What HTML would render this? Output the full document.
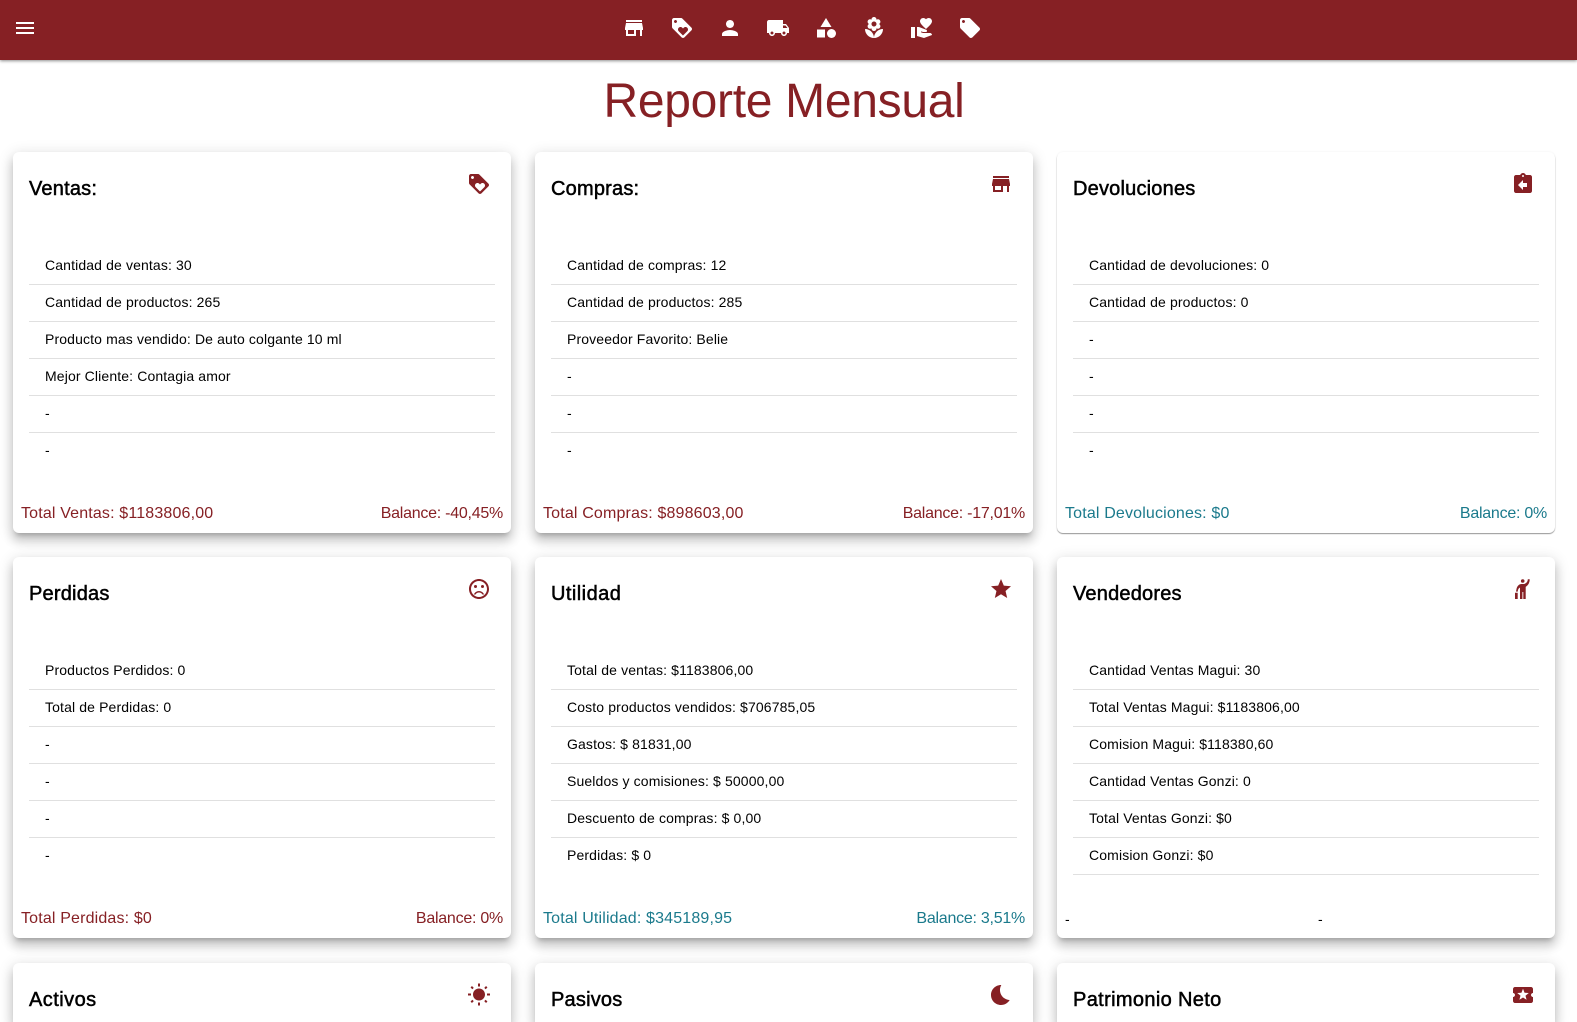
<!DOCTYPE html>
<html lang="es"><head><meta charset="utf-8"><title>Reporte Mensual</title>
<style>
*{box-sizing:border-box}
html,body{margin:0;padding:0;width:1577px;height:1022px;overflow:hidden;background:#fff;font-family:"Liberation Sans",sans-serif;color:#000}
#w{position:relative;width:1577px;height:1022px;overflow:hidden;background:#fff}
.bar{position:absolute;left:0;top:0;width:1577px;height:60px;background:#862024;box-shadow:0 1px 3px rgba(0,0,0,.45)}
svg{position:absolute;width:24px;height:24px;display:block}
.bar svg{fill:#fff;top:16px}
h1{position:absolute;left:0;top:74px;width:1568px;margin:0;text-align:center;font-weight:400;font-size:48px;line-height:56px;color:#862024;letter-spacing:-.3px}
.card{position:absolute;width:498px;height:381px;background:#fff;border-radius:6px;box-shadow:0 5px 5px -3px rgba(0,0,0,.2),0 8px 10px 1px rgba(0,0,0,.14),0 3px 14px 2px rgba(0,0,0,.12)}
.card.r3{height:59px;border-radius:6px 6px 0 0}
.card.flat{box-shadow:0 1px 1px rgba(0,0,0,.4),0 0 2px rgba(0,0,0,.06)}
.card svg{right:20px;top:20px;fill:#862024}
.t{position:absolute;left:16px;top:25px;font-size:20px;line-height:24px;-webkit-text-stroke:.5px #000;letter-spacing:.2px}
ul{position:absolute;left:16px;top:96px;width:466px;margin:0;padding:0;list-style:none}
li{height:37px;line-height:34px;padding-left:16px;font-size:14px;border-bottom:1px solid #e0e0e0;letter-spacing:.13px}
li:last-child{border-bottom:0}
ul.all li:last-child{border-bottom:1px solid #e0e0e0}
.f{position:absolute;left:8px;right:8px;top:349.5px;display:flex;justify-content:space-between;font-size:16px;line-height:24px;color:#862024;letter-spacing:.16px}
.f span+span{letter-spacing:-.25px}
.f.g{color:#1b7a8c}
.d{position:absolute;top:350px;font-size:14px;line-height:24px}
</style></head><body>
<div id="w">
<div class="bar">
<svg style="left:13px"><path d="M3 18h18v-2H3v2zm0-5h18v-2H3v2zm0-7v2h18V6H3z"/></svg>
<svg style="left:622px"><path d="M20 4H4v2h16V4zm1 10v-2l-1-5H4l-1 5v2h1v6h10v-6h4v6h2v-6h1zm-9 4H6v-4h6v4z"/></svg>
<svg style="left:670px"><path d="M21.41 11.58l-9-9C12.05 2.22 11.55 2 11 2H4c-1.1 0-2 .9-2 2v7c0 .55.22 1.05.59 1.42l9 9c.36.36.86.58 1.41.58s1.05-.22 1.41-.59l7-7c.37-.36.59-.86.59-1.41s-.23-1.06-.59-1.42zM5.5 7C4.67 7 4 6.33 4 5.5S4.67 4 5.5 4 7 4.67 7 5.5 6.33 7 5.5 7zm11.77 8.27L13 19.54l-4.27-4.27C8.28 14.81 8 14.19 8 13.5c0-1.38 1.12-2.5 2.5-2.5.69 0 1.32.28 1.77.74l.73.72.73-.73c.45-.45 1.08-.73 1.77-.73 1.38 0 2.5 1.12 2.5 2.5 0 .69-.28 1.32-.73 1.77z"/></svg>
<svg style="left:718px"><path d="M12 12c2.21 0 4-1.79 4-4s-1.79-4-4-4-4 1.79-4 4 1.79 4 4 4zm0 2c-2.67 0-8 1.34-8 4v2h16v-2c0-2.66-5.33-4-8-4z"/></svg>
<svg style="left:766px"><path d="M20 8h-3V4H3c-1.1 0-2 .9-2 2v11h2c0 1.66 1.34 3 3 3s3-1.34 3-3h6c0 1.66 1.34 3 3 3s3-1.34 3-3h2v-5l-3-4zM6 18.5c-.83 0-1.5-.67-1.5-1.5s.67-1.5 1.5-1.5 1.5.67 1.5 1.5-.67 1.5-1.5 1.5zm13.5-9l1.96 2.5H17V9.5h2.5zm-1.5 9c-.83 0-1.5-.67-1.5-1.5s.67-1.5 1.5-1.5 1.5.67 1.5 1.5-.67 1.5-1.5 1.5z"/></svg>
<svg style="left:814px"><path d="M12 2l-5.5 9h11z"/><circle cx="17.5" cy="17.5" r="4.5"/><path d="M3 13.5h8v8H3z"/></svg>
<svg style="left:862px"><path d="M12 22c4.97 0 9-4.03 9-9-4.97 0-9 4.03-9 9zM5.6 10.25c0 1.38 1.12 2.5 2.5 2.5.53 0 1.01-.16 1.42-.44l-.02.19c0 1.38 1.12 2.5 2.5 2.5s2.5-1.12 2.5-2.5l-.02-.19c.4.28.89.44 1.42.44 1.38 0 2.5-1.12 2.5-2.5 0-1-.59-1.85-1.43-2.25.84-.4 1.43-1.25 1.43-2.25 0-1.38-1.12-2.5-2.5-2.5-.53 0-1.01.16-1.42.44l.02-.19C14.5 2.12 13.38 1 12 1S9.5 2.12 9.5 3.5l.02.19c-.4-.28-.89-.44-1.42-.44-1.38 0-2.5 1.12-2.5 2.5 0 1 .59 1.85 1.43 2.25-.84.4-1.43 1.25-1.43 2.25zM12 5.5c1.38 0 2.5 1.12 2.5 2.5s-1.12 2.5-2.5 2.5S9.5 9.38 9.5 8s1.12-2.5 2.5-2.5zM3 13c0 4.97 4.03 9 9 9 0-4.97-4.03-9-9-9z"/></svg>
<svg style="left:910px"><path d="M1 11h4v11H1zm15-7.75C16.65 2.49 17.66 2 18.7 2 20.55 2 22 3.45 22 5.3c0 2.27-2.91 4.9-6 7.7-3.09-2.81-6-5.44-6-7.7C10 3.45 11.45 2 13.3 2c1.04 0 2.05.49 2.7 1.25zM20 17h-7l-2.09-.73.33-.94L13 16h2.82c.65 0 1.18-.53 1.18-1.18 0-.49-.31-.93-.77-1.11L8.97 11H7v9.02L14 22l8.01-3c-.01-1.1-.9-2-2.01-2z"/></svg>
<svg style="left:958px"><path d="M21.41 11.58l-9-9C12.05 2.22 11.55 2 11 2H4c-1.1 0-2 .9-2 2v7c0 .55.22 1.1.59 1.45l9 9c.36.36.86.55 1.41.55s1.05-.22 1.41-.59l7-7c.37-.36.59-.86.59-1.41s-.23-1.06-.59-1.42zM5.5 7C4.67 7 4 6.33 4 5.5S4.67 4 5.5 4 7 4.67 7 5.5 6.33 7 5.5 7z"/></svg>
</div>
<h1>Reporte Mensual</h1>

<div class="card" style="left:13px;top:152px"><div class="t">Ventas:</div>
<svg><path d="M21.41 11.58l-9-9C12.05 2.22 11.55 2 11 2H4c-1.1 0-2 .9-2 2v7c0 .55.22 1.05.59 1.42l9 9c.36.36.86.58 1.41.58s1.05-.22 1.41-.59l7-7c.37-.36.59-.86.59-1.41s-.23-1.06-.59-1.42zM5.5 7C4.67 7 4 6.33 4 5.5S4.67 4 5.5 4 7 4.67 7 5.5 6.33 7 5.5 7zm11.77 8.27L13 19.54l-4.27-4.27C8.28 14.81 8 14.19 8 13.5c0-1.38 1.12-2.5 2.5-2.5.69 0 1.32.28 1.77.74l.73.72.73-.73c.45-.45 1.08-.73 1.77-.73 1.38 0 2.5 1.12 2.5 2.5 0 .69-.28 1.32-.73 1.77z"/></svg>
<ul><li>Cantidad de ventas: 30</li><li>Cantidad de productos: 265</li><li>Producto mas vendido: De auto colgante 10 ml</li><li>Mejor Cliente: Contagia amor</li><li>-</li><li>-</li></ul>
<div class="f"><span>Total Ventas: $1183806,00</span><span>Balance: -40,45%</span></div></div>

<div class="card" style="left:535px;top:152px"><div class="t">Compras:</div>
<svg><path d="M20 4H4v2h16V4zm1 10v-2l-1-5H4l-1 5v2h1v6h10v-6h4v6h2v-6h1zm-9 4H6v-4h6v4z"/></svg>
<ul><li>Cantidad de compras: 12</li><li>Cantidad de productos: 285</li><li>Proveedor Favorito: Belie</li><li>-</li><li>-</li><li>-</li></ul>
<div class="f"><span>Total Compras: $898603,00</span><span>Balance: -17,01%</span></div></div>

<div class="card flat" style="left:1057px;top:152px"><div class="t">Devoluciones</div>
<svg><path d="M19 3h-4.18C14.4 1.84 13.3 1 12 1c-1.3 0-2.4.84-2.82 2H5c-1.1 0-2 .9-2 2v14c0 1.1.9 2 2 2h14c1.1 0 2-.9 2-2V5c0-1.1-.9-2-2-2zm-7 0c.55 0 1 .45 1 1s-.45 1-1 1-1-.45-1-1 .45-1 1-1zm4 12h-4v3l-5-5 5-5v3h4v4z"/></svg>
<ul><li>Cantidad de devoluciones: 0</li><li>Cantidad de productos: 0</li><li>-</li><li>-</li><li>-</li><li>-</li></ul>
<div class="f g"><span>Total Devoluciones: $0</span><span>Balance: 0%</span></div></div>

<div class="card" style="left:13px;top:557px"><div class="t">Perdidas</div>
<svg><circle cx="15.5" cy="9.5" r="1.5"/><circle cx="8.5" cy="9.5" r="1.5"/><path d="M11.99 2C6.47 2 2 6.48 2 12s4.47 10 9.99 10C17.52 22 22 17.52 22 12S17.52 2 11.99 2zM12 20c-4.42 0-8-3.58-8-8s3.58-8 8-8 8 3.58 8 8-3.58 8-8 8zm0-6c-2.33 0-4.32 1.45-5.12 3.5h1.67c.69-1.19 1.97-2 3.45-2s2.75.81 3.45 2h1.67c-.8-2.05-2.79-3.5-5.12-3.5z"/></svg>
<ul><li>Productos Perdidos: 0</li><li>Total de Perdidas: 0</li><li>-</li><li>-</li><li>-</li><li>-</li></ul>
<div class="f"><span>Total Perdidas: $0</span><span>Balance: 0%</span></div></div>

<div class="card" style="left:535px;top:557px"><div class="t" style="letter-spacing:.45px">Utilidad</div>
<svg><path d="M12 17.27L18.18 21l-1.64-7.03L22 9.24l-7.19-.61L12 2 9.19 8.63 2 9.24l5.46 4.73L5.82 21z"/></svg>
<ul><li>Total de ventas: $1183806,00</li><li>Costo productos vendidos: $706785,05</li><li>Gastos: $ 81831,00</li><li>Sueldos y comisiones: $ 50000,00</li><li>Descuento de compras: $ 0,00</li><li>Perdidas: $ 0</li></ul>
<div class="f g"><span>Total Utilidad: $345189,95</span><span>Balance: 3,51%</span></div></div>

<div class="card" style="left:1057px;top:557px"><div class="t">Vendedores</div>
<svg><circle cx="11.7" cy="4" r="1.8"/><path d="M16.8 2.3h1.9c0 3-1.2 6-4 7.6V22h-2.4v-7h-.9v7H9V10.500c-1 .5-1.700 1.400-2 2.500l-.4 1.800-1.600-.3.4-2C6 9 8 7 10.500 7h2c2.200 0 4.300-2 4.300-4.700zM4 15.700h2.700V22H4z"/></svg>
<ul class="all"><li>Cantidad Ventas Magui: 30</li><li>Total Ventas Magui: $1183806,00</li><li>Comision Magui: $118380,60</li><li>Cantidad Ventas Gonzi: 0</li><li>Total Ventas Gonzi: $0</li><li>Comision Gonzi: $0</li></ul>
<div class="d" style="left:8px">-</div><div class="d" style="left:261px">-</div></div>

<div class="card r3" style="left:13px;top:963px"><div class="t" style="letter-spacing:.45px">Activos</div>
<svg style="top:19.500px"><path d="M6.760 4.840l-1.800-1.790-1.410 1.410 1.790 1.790 1.420-1.410zM4 10.500H1v2h3v-2zm9-9.950h-2V3.500h2V.55zm7.450 3.910l-1.410-1.410-1.790 1.790 1.410 1.410 1.790-1.790zm-3.210 13.700l1.790 1.800 1.410-1.410-1.800-1.790-1.400 1.400zM20 10.500v2h3v-2h-3zm-8-5c-3.310 0-6 2.690-6 6s2.690 6 6 6 6-2.690 6-6-2.690-6-6-6zm-1 16.950h2V19.500h-2v2.950zm-7.450-3.910l1.410 1.410 1.790-1.800-1.410-1.410-1.790 1.800z"/></svg></div>

<div class="card r3" style="left:535px;top:963px"><div class="t">Pasivos</div>
<svg><path d="M12.34 2.02C6.59 1.82 2 6.42 2 12c0 5.52 4.48 10 10 10 3.71 0 6.93-2.02 8.66-5.02-7.51-.25-12.09-8.43-8.32-14.96z"/></svg></div>

<div class="card r3" style="left:1057px;top:963px"><div class="t" style="letter-spacing:.35px">Patrimonio Neto</div>
<svg><path d="M20 12c0-1.100.9-2 2-2V6c0-1.100-.9-2-2-2H4c-1.100 0-1.990.9-1.990 2v4c1.100 0 1.990.9 1.990 2s-.89 2-2 2v4c0 1.100.9 2 2 2h16c1.100 0 2-.9 2-2v-4c-1.100 0-2-.9-2-2zm-4.420 4.800L12 14.500l-3.580 2.300 1.080-4.120-3.290-2.690 4.240-.25L12 5.800l1.540 3.950 4.240.25-3.290 2.690 1.090 4.110z"/></svg></div>
</div>
</body></html>
